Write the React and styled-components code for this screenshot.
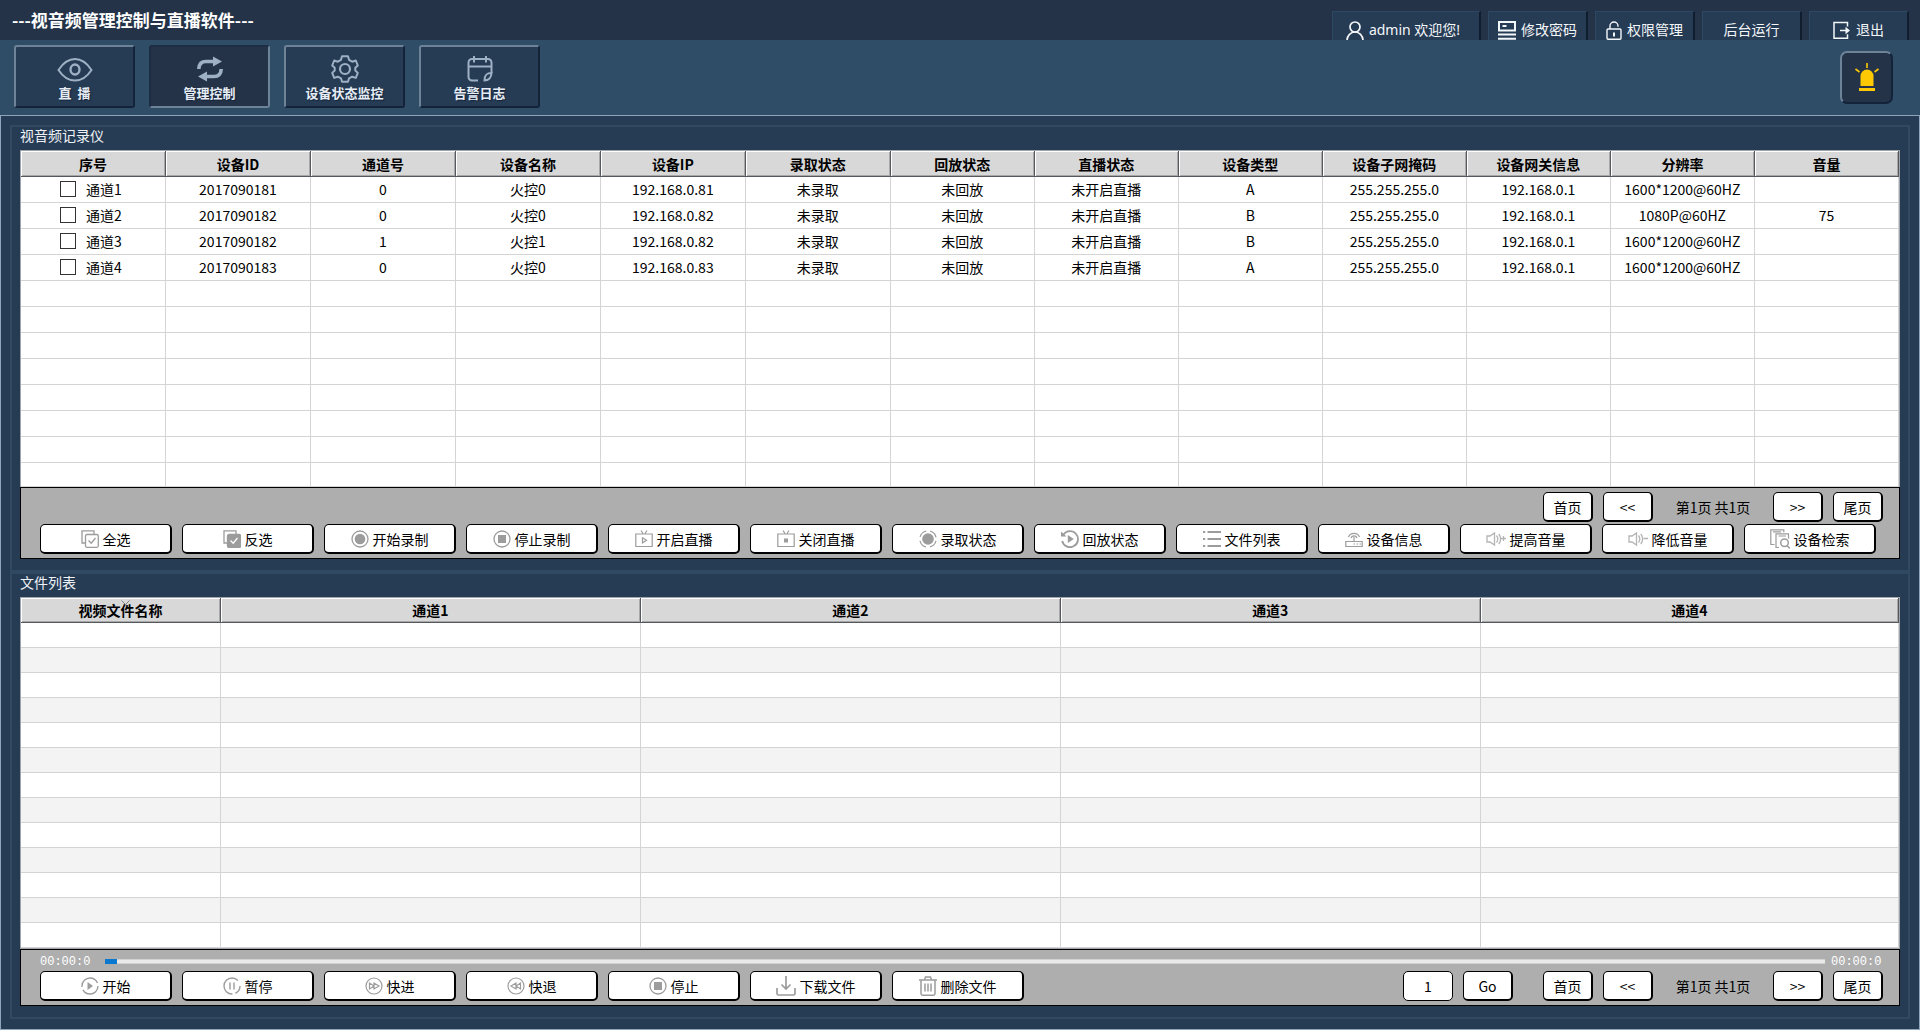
import React, { useState } from "react";
import styled, { createGlobalStyle, css } from "styled-components";

const GlobalStyle = createGlobalStyle`
  * { box-sizing: border-box; }
  body {
    margin: 0;
    background: #263b54;
    font-family: "Noto Sans CJK SC", "Noto Sans", sans-serif;
    font-size: 14px;
    color: #000;
  }
  button, input { font: inherit; color: inherit; margin: 0; }
`;

/* ---------- icons ---------- */

const Svg = styled.svg`
  flex: none;
  display: block;
  width: ${(p) => p.$w}px;
  height: ${(p) => p.$h}px;
  fill: none;
  stroke: currentColor;
  stroke-width: ${(p) => p.$stroke};
`;

function Icon({ w = 18, h = 18, box, stroke = 1.5, children }) {
  return (
    <Svg $w={w} $h={h} $stroke={stroke} viewBox={box || `0 0 ${w} ${h}`} aria-hidden="true">
      {children}
    </Svg>
  );
}

const icons = {
  eye: (
    <Icon w={36} h={28} stroke={2}>
      <path d="M1.5 15C6 8 11 4 18 4s12 4 16.5 11C30 22 25 25.5 18 25.5S6 22 1.5 15Z" />
      <ellipse cx="18" cy="14.5" rx="4.5" ry="5" strokeWidth="2.4" />
    </Icon>
  ),
  sync: (
    <Icon w={28} h={28} stroke={3.6}>
      <path d="M2.8 14C3 8.500 6 6.500 10 6.500h8" />
      <path d="M17 1.500 26 6.500l-9 5Z" fill="currentColor" stroke="none" />
      <path d="M25.200 14c-.2 5.500-3.200 7.500-7.200 7.500h-8" />
      <path d="M11 16.500 2 21.500l9 5Z" fill="currentColor" stroke="none" />
    </Icon>
  ),
  gear: (
    <Icon w={28} h={28} stroke={2}>
      <path d="M11 1.200h6l1 3.600 3.200 1.900 3.600-1.200 2 5-2.500 2.300v2.700l2.500 2.400-2 5-3.600-1.200L18 23.300l-1 3.500h-6l-1-3.500-3.200-1.600-3.600 1.200-2-5 2.500-2.400v-2.700L1.200 10.500l2-5 3.600 1.200L10 4.800Z" strokeLinejoin="round" />
      <circle cx="14" cy="14" r="5" strokeWidth="2.200" />
    </Icon>
  ),
  calendar: (
    <Icon w={28} h={28} stroke={2}>
      <path d="M12 25.500H6a3.500 3.500 0 0 1-3.500-3.500V7.500A3.500 3.500 0 0 1 6 4h16a3.500 3.500 0 0 1 3.500 3.500V18" />
      <path d="M2.500 11.500h23M8 1v6.500M20 1v6.500M8 4h12" />
      <path d="M25.500 18c-4 0-7 1-7 7.500 4 0 7-3 7-7.500Z" />
    </Icon>
  ),
  user: (
    <Icon w={18} h={19} stroke={1.700}>
      <circle cx="9" cy="6" r="5" />
      <path d="M1 19c.4-4.500 3.500-8 8-8s7.600 3.500 8 8" />
    </Icon>
  ),
  password: (
    <Icon w={18} h={19} stroke={2}>
      <path d="M1 1h16v8.500H1ZM4.500 5h4M0 13.500h18M0 17.800h18" />
    </Icon>
  ),
  lock: (
    <Icon w={16} h={19} stroke={1.400}>
      <rect x="1" y="8" width="14" height="10.300" rx="1" />
      <path d="M4 8V5a4 4 0 0 1 8 0v.8" />
      <path d="M8 11.500v4" strokeWidth="2" />
    </Icon>
  ),
  exit: (
    <Icon w={18} h={19} stroke={1.500}>
      <path d="M14.500 5.500V1.500H1v15.800h13.500v-4M7 9.500h8" />
      <path d="M12.500 5.800 17 9.500l-4.500 3.700Z" fill="currentColor" stroke="none" />
    </Icon>
  ),
  alarm: (
    <Icon w={26} h={30} stroke={2}>
      <path d="M6.500 23V13a6.500 6.500 0 0 1 13 0v10Z" fill="currentColor" stroke="none" />
      <path d="M5 26.500h16" strokeWidth="3" />
      <path d="M13 0v5M1.500 6l4 3M24.500 6l-4 3" strokeWidth="1.600" />
    </Icon>
  ),
  selectAll: (
    <Icon stroke={1.300}>
      <path d="M4.500 13H1V.8h12V4" />
      <rect x="4.500" y="4.500" width="12.800" height="12.800" rx="1.500" />
      <path d="m7.500 10.500 2.700 2.700L14.500 8" />
    </Icon>
  ),
  invert: (
    <Icon stroke={1.300}>
      <path d="M4.500 13H1V.8h12V4" />
      <rect x="4.500" y="4.500" width="13" height="13" rx="1.500" fill="currentColor" />
      <path d="m7.500 10.500 2.700 2.700L14.500 8" stroke="#fff" />
    </Icon>
  ),
  record: (
    <Icon stroke={1.300}>
      <circle cx="9" cy="9" r="8" />
      <circle cx="9" cy="9" r="5.300" fill="currentColor" stroke="none" />
    </Icon>
  ),
  stop: (
    <Icon stroke={1.300}>
      <circle cx="9" cy="9" r="8" />
      <rect x="5" y="5" width="8" height="8" fill="currentColor" stroke="none" />
    </Icon>
  ),
  liveOn: (
    <Icon stroke={1.200}>
      <path d="M.8 4h16.400v12.500H.8ZM6 .5l2 3M12 .5l-2 3" />
      <path d="M7.500 7.800v5l4-2.500Z" />
    </Icon>
  ),
  liveOff: (
    <Icon stroke={1.200}>
      <path d="M.8 4h16.400v12.500H.8ZM6 .5l2 3M12 .5l-2 3" />
      <rect x="7" y="8.500" width="4" height="4" fill="currentColor" stroke="none" />
    </Icon>
  ),
  recordState: (
    <Icon stroke={1.200}>
      <circle cx="9" cy="9" r="8.200" strokeDasharray="8.880 4" strokeDashoffset="-2" />
      <circle cx="9" cy="9" r="5.800" fill="currentColor" stroke="none" />
    </Icon>
  ),
  replayState: (
    <Icon stroke={1.800}>
      <path d="M2.500 4.500A8 8 0 1 1 1.200 11" />
      <path d="M0 1.500v5h5.500Z" fill="currentColor" stroke="none" />
      <path d="M6.800 5v8l6-4Z" fill="currentColor" stroke="none" />
    </Icon>
  ),
  list: (
    <Icon stroke={1.800}>
      <path d="M4.500 2H18M4.500 9H18M4.500 16H18M0 2h2.200M0 9h2.200M0 16h2.200" />
    </Icon>
  ),
  device: (
    <Icon stroke={1.200}>
      <path d="M.8 11.500h16.400v5H.8ZM9 7v4M3.500 7A6 6 0 0 1 14.500 7M6 8a3.200 3.200 0 0 1 6 0M8.500 14h1.500M11.500 14H13M14.500 14H16" />
    </Icon>
  ),
  volumeUp: (
    <Icon w={20} h={18} stroke={1.300}>
      <path d="M1 6v6h3l4.500 3V3L4 6ZM10.500 5.500c1.500 2 1.500 5 0 7M12.800 4c2.200 3 2.200 7 0 10M15 8.500h5M17.500 6v5" />
    </Icon>
  ),
  volumeDown: (
    <Icon w={20} h={18} stroke={1.300}>
      <path d="M1 6v6h3l4.500 3V3L4 6ZM10.500 5.500c1.500 2 1.500 5 0 7M12.800 4c2.200 3 2.200 7 0 10M15.500 8.500H20" />
    </Icon>
  ),
  search: (
    <Icon w={20} h={20} stroke={1.200}>
      <path d="M4.500 15.500H.8V.8h13v2.500M3 2.800h8M9 18.500H6V4.800h12.500v5M8.500 7h7.500" />
      <circle cx="14.500" cy="13.800" r="3.800" strokeWidth="1.500" />
      <path d="m17 16.500 2.800 3" strokeWidth="1.500" />
    </Icon>
  ),
  play: (
    <Icon stroke={1.400}>
      <circle cx="9" cy="9" r="8" strokeDasharray="21 3 23 3.260" />
      <path d="M6.500 5v8l5.500-4Z" fill="currentColor" stroke="none" />
    </Icon>
  ),
  pause: (
    <Icon stroke={1.400}>
      <circle cx="9" cy="9" r="8" strokeDasharray="9 3 32 6.260" />
      <path d="M7 5.500v7M11 5.500v7" />
    </Icon>
  ),
  forward: (
    <Icon stroke={1.200}>
      <circle cx="9" cy="9" r="8" />
      <path d="M4.500 6v6L9 9ZM9 6v6l5-3Z" />
    </Icon>
  ),
  rewind: (
    <Icon stroke={1.200}>
      <circle cx="9" cy="9" r="8" />
      <path d="M13.500 6v6L9 9ZM9 6v6L4 9Z" />
    </Icon>
  ),
  download: (
    <Icon w={20} h={20} stroke={1.700}>
      <path d="M10 0v13M5.500 8.500 10 13l4.500-4.500M1 12v5.500a1.500 1.500 0 0 0 1.500 1.500h15a1.500 1.500 0 0 0 1.500-1.500V12" />
    </Icon>
  ),
  trash: (
    <Icon w={18} h={20} stroke={1.500}>
      <path d="M0 4h18M5.500 4l1-3h5l1 3M2 4v13.500c0 1 .5 1.700 1.500 1.700h11c1 0 1.500-.7 1.500-1.700V4M6 7.500v8M9 7.500v8M12 7.500v8" />
    </Icon>
  ),
};

/* ---------- frame ---------- */

const Page = styled.div`
  min-height: 100vh;
  display: flex;
  flex-direction: column;
`;

const TitleBar = styled.header`
  height: 40px;
  display: flex;
  justify-content: space-between;
  padding: 0 11px 0 12px;
  overflow: hidden;
  background: #243348;
  color: #fff;
`;

const Title = styled.h1`
  margin: 0;
  font-size: 17px;
  line-height: 40px;
  font-weight: 700;
`;

const UserMenu = styled.nav`
  display: flex;
  gap: 7px;
  padding-top: 11px;
`;

const UserButton = styled.button`
  width: ${(p) => (p.$wide ? 149 : 100)}px;
  height: 40px;
  padding: 0 ${(p) => (p.$wide ? 6 : 0)}px 2px 0;
  display: flex;
  align-items: center;
  justify-content: center;
  gap: 5px;
  font-family: "Noto Sans", "Noto Sans CJK SC", sans-serif;
  line-height: 20px;
  white-space: nowrap;
  color: #f4f7fa;
  background: #263b54;
  border: 1px solid #2d4862;
  border-right: 2px solid #101d2e;
`;

const Toolbar = styled.div`
  height: 75px;
  display: flex;
  align-items: flex-start;
  gap: 14px;
  padding: 5px 27px 0 14px;
  background: #304d68;
`;

const raised = css`
  background: #263b54;
  border-style: solid;
  border-width: 2px;
  border-color: #6f8398 #13233a #13233a #6f8398;
`;

const sunken = css`
  background: #243348;
  border-style: solid;
  border-width: 2px;
  border-color: #1d2d42 #6f8398 #6f8398 #1d2d42;
`;

const Tab = styled.button`
  width: 121px;
  height: 63px;
  padding: 8px 0 0;
  display: flex;
  flex-direction: column;
  align-items: center;
  justify-content: flex-start;
  border-radius: 3px;
  color: #9db0c4;
  ${(p) => (p.$active ? sunken : raised)}
`;

const TabLabel = styled.span`
  font-size: 13px;
  line-height: 20px;
  font-weight: 700;
  white-space: pre;
  color: #e6edf5;
  text-shadow: 1px 1px 1px #13233a;
`;

const AlarmButton = styled.button`
  width: 53px;
  height: 53px;
  margin: 6px 0 0 auto;
  padding: 0;
  display: flex;
  align-items: center;
  justify-content: center;
  color: #fdc904;
  ${raised}
  background: #243348;
  border-radius: 7px;
`;

const Content = styled.main`
  flex: 1;
  padding: 9px;
  border: 1px solid #8fa5bb;
  background: #263b54;
`;

const Group = styled.section`
  padding: 0 8px 11px;
  border: 2px solid #324963;
`;

const GroupTitle = styled.h2`
  margin: 0 0 7px;
  font-size: 14px;
  line-height: 16px;
  font-weight: 400;
  color: #eef2f6;
`;

/* ---------- tables ---------- */

const TableFrame = styled.div`
  border: solid #a0a4a8;
  border-width: 1px 1px ${(p) => (p.$closed ? 1 : 0)}px;
  background: #fff;
`;

const Table = styled.table`
  width: 100%;
  table-layout: fixed;
  border-collapse: separate;
  border-spacing: 0;
  line-height: 20px;
  text-align: center;
`;

const HeadCell = styled.th`
  width: ${(p) => p.$width || "auto"};
  height: ${(p) => p.$height}px;
  padding: 0;
  font-weight: 700;
  white-space: nowrap;
  background: #d8d8d8;
  border-right: 1px solid #55585c;
  border-bottom: 1px solid #55585c;
  box-shadow: inset 1px 1px 0 #fff, inset -1px -1px 0 #a8a8a8;
`;

const SortHead = styled.span`
  position: relative;
  display: inline-block;
`;

const SortMark = styled.svg`
  position: absolute;
  top: 0;
  left: 50%;
  width: 9px;
  height: 5px;
  fill: none;
  stroke: #808080;
`;

const Row = styled.tr`
  background: ${(p) => (p.$shaded ? "#f3f3f3" : "#fff")};
`;

const Cell = styled.td`
  height: ${(p) => p.$height}px;
  padding: 0 0 2px;
  white-space: nowrap;
  border-right: 1px solid #d4d4d4;
  border-bottom: 1px solid #d4d4d4;
`;

const ChannelLabel = styled.label`
  display: flex;
  align-items: center;
  justify-content: center;
  gap: 10px;
  padding-right: 4px;
`;

const CheckBox = styled.input`
  appearance: none;
  width: 16px;
  height: 16px;
  border: 1px solid #333;
  background: #fff;
  &:checked { box-shadow: inset 0 0 0 3px #fff; background: #333; }
`;

/* ---------- control panels ---------- */

const Panel = styled.div`
  display: flex;
  flex-direction: column;
  gap: ${(p) => (p.$flush ? 0 : 2)}px;
  padding: ${(p) => (p.$flush ? "0 16px 4px 19px" : "4px 16px 4px 19px")};
  border: 1px solid #000;
  background: #aeaeae;
`;

const Actions = styled.div`
  flex: 1;
  display: flex;
  gap: 10px;
`;

const ControlRow = styled.div`
  display: flex;
  justify-content: flex-end;
`;

const buttonFace = css`
  height: 30px;
  padding: 0;
  border: solid #000;
  border-width: 1px 2px 2px 1px;
  border-radius: 5px;
  background: #fff;
  line-height: 20px;
  white-space: nowrap;
`;

const ActionButton = styled.button`
  ${buttonFace}
  flex: 0 1 132px;
  display: flex;
  align-items: center;
  justify-content: center;
  gap: 4px;
  & > svg { color: ${(p) => (p.$faint ? "#b4b4b4" : "#9c9c9c")}; }
`;

const PagerGroup = styled.div`
  display: flex;
  gap: 10px;
`;

const PagerButton = styled.button`
  ${buttonFace}
  width: 50px;
`;

const PageInfo = styled.span`
  width: 100px;
  line-height: 30px;
  text-align: center;
  white-space: nowrap;
`;

const JumpGroup = styled.div`
  display: flex;
  gap: 10px;
  margin-right: 30px;
`;

const PageInput = styled.input`
  width: 50px;
  height: 30px;
  padding: 0;
  text-align: center;
  border: 1px solid #000;
  border-radius: 5px;
  background: #fff;
`;

const Timeline = styled.div`
  height: 21px;
  display: flex;
  align-items: center;
  padding-top: 2px;
`;

const Time = styled.span`
  width: 52px;
  font-family: "Liberation Mono", monospace;
  font-size: 12px;
  line-height: 16px;
  color: #fff;
`;

const Seek = styled.input`
  appearance: none;
  flex: 1;
  min-width: 0;
  height: 5px;
  margin: 0 6px 0 13px;
  background: linear-gradient(#d2d2d2 1px, #e9e9e9 1px, #e9e9e9 4px, #d2d2d2 4px);
  &::-webkit-slider-thumb {
    appearance: none;
    width: 12px;
    height: 5px;
    background: #0b78d0;
  }
`;

/* ---------- data ---------- */

const tabs = [
  ["eye", "直  播"],
  ["sync", "管理控制"],
  ["gear", "设备状态监控"],
  ["calendar", "告警日志"],
];

const deviceColumns = [
  "序号", "设备ID", "通道号", "设备名称", "设备IP", "录取状态", "回放状态",
  "直播状态", "设备类型", "设备子网掩码", "设备网关信息", "分辨率", "音量",
];

const devices = [
  ["通道1", "2017090181", "0", "火控0", "192.168.0.81", "未录取", "未回放", "未开启直播", "A", "255.255.255.0", "192.168.0.1", "1600*1200@60HZ", ""],
  ["通道2", "2017090182", "0", "火控0", "192.168.0.82", "未录取", "未回放", "未开启直播", "B", "255.255.255.0", "192.168.0.1", "1080P@60HZ", "75"],
  ["通道3", "2017090182", "1", "火控1", "192.168.0.82", "未录取", "未回放", "未开启直播", "B", "255.255.255.0", "192.168.0.1", "1600*1200@60HZ", ""],
  ["通道4", "2017090183", "0", "火控0", "192.168.0.83", "未录取", "未回放", "未开启直播", "A", "255.255.255.0", "192.168.0.1", "1600*1200@60HZ", ""],
];

const deviceActions = [
  ["selectAll", "全选"], ["invert", "反选"], ["record", "开始录制"], ["stop", "停止录制"],
  ["liveOn", "开启直播"], ["liveOff", "关闭直播"], ["recordState", "录取状态"],
  ["replayState", "回放状态"], ["list", "文件列表"], ["device", "设备信息"],
  ["volumeUp", "提高音量", true], ["volumeDown", "降低音量", true], ["search", "设备检索"],
];

const fileColumns = ["视频文件名称", "通道1", "通道2", "通道3", "通道4"];
const fileWidths = ["200px", "22.36%", "22.36%", "22.36%", "auto"];

const playActions = [
  ["play", "开始"], ["pause", "暂停"], ["forward", "快进"], ["rewind", "快退"],
  ["stop", "停止"], ["download", "下载文件"], ["trash", "删除文件"],
];

const blankRows = (count) => Array.from({ length: count }, (_, i) => i);

/* ---------- views ---------- */

function ActionList({ items }) {
  return (
    <Actions>
      {items.map(([icon, text, faint]) => (
        <ActionButton key={text} type="button" $faint={faint}>
          {icons[icon]}
          <span>{text}</span>
        </ActionButton>
      ))}
    </Actions>
  );
}

function Pager() {
  return (
    <PagerGroup>
      <PagerButton type="button">首页</PagerButton>
      <PagerButton type="button">&lt;&lt;</PagerButton>
      <PageInfo>第1页 共1页</PageInfo>
      <PagerButton type="button">&gt;&gt;</PagerButton>
      <PagerButton type="button">尾页</PagerButton>
    </PagerGroup>
  );
}

function DeviceTable() {
  const [checked, setChecked] = useState({});
  return (
    <TableFrame>
      <Table>
        <thead>
          <tr>
            {deviceColumns.map((name, i) => (
              <HeadCell key={name} scope="col" $height={26} $width={i < 6 ? "7.72%" : undefined}>
                {name}
              </HeadCell>
            ))}
          </tr>
        </thead>
        <tbody>
          {devices.map((device) => (
            <Row key={device[0]}>
              <Cell $height={26}>
                <ChannelLabel>
                  <CheckBox
                    type="checkbox"
                    checked={!!checked[device[0]]}
                    onChange={(e) => setChecked({ ...checked, [device[0]]: e.target.checked })}
                  />
                  {device[0]}
                </ChannelLabel>
              </Cell>
              {device.slice(1).map((value, i) => (
                <Cell key={i} $height={26}>{value}</Cell>
              ))}
            </Row>
          ))}
          {blankRows(8).map((r) => (
            <Row key={r}>
              {deviceColumns.map((name) => (
                <Cell key={name} $height={r === 7 ? 24 : 26} />
              ))}
            </Row>
          ))}
        </tbody>
      </Table>
    </TableFrame>
  );
}

function FileTable() {
  return (
    <TableFrame $closed>
      <Table>
        <thead>
          <tr>
            {fileColumns.map((name, i) => (
              <HeadCell key={name} scope="col" $height={25} $width={fileWidths[i]}>
                {i === 0 ? (
                  <SortHead>
                    {name}
                    <SortMark viewBox="0 0 9 5" aria-hidden="true"><path d="M.5.5l4 4 4-4" /></SortMark>
                  </SortHead>
                ) : name}
              </HeadCell>
            ))}
          </tr>
        </thead>
        <tbody>
          {blankRows(13).map((r) => (
            <Row key={r} $shaded={r % 2 === 1}>
              {fileColumns.map((name) => <Cell key={name} $height={25} />)}
            </Row>
          ))}
        </tbody>
      </Table>
    </TableFrame>
  );
}

export default function App() {
  const [active, setActive] = useState("sync");
  const [page, setPage] = useState("1");
  const [position, setPosition] = useState(0);
  return (
    <Page>
      <GlobalStyle />
      <TitleBar>
        <Title>---视音频管理控制与直播软件---</Title>
        <UserMenu aria-label="用户">
          <UserButton type="button" $wide>{icons.user}admin 欢迎您!</UserButton>
          <UserButton type="button">{icons.password}修改密码</UserButton>
          <UserButton type="button">{icons.lock}权限管理</UserButton>
          <UserButton type="button">后台运行</UserButton>
          <UserButton type="button">{icons.exit}退出</UserButton>
        </UserMenu>
      </TitleBar>
      <Toolbar>
        {tabs.map(([icon, text]) => (
          <Tab key={icon} type="button" $active={active === icon} onClick={() => setActive(icon)}>
            {icons[icon]}
            <TabLabel>{text}</TabLabel>
          </Tab>
        ))}
        <AlarmButton type="button" aria-label="告警">{icons.alarm}</AlarmButton>
      </Toolbar>
      <Content>
        <Group>
          <GroupTitle>视音频记录仪</GroupTitle>
          <DeviceTable />
          <Panel>
            <ControlRow><Pager /></ControlRow>
            <ActionList items={deviceActions} />
          </Panel>
        </Group>
        <Group>
          <GroupTitle>文件列表</GroupTitle>
          <FileTable />
          <Panel $flush>
            <Timeline>
              <Time>00:00:0</Time>
              <Seek
                type="range"
                aria-label="播放进度"
                min="0"
                max="100"
                value={position}
                onChange={(e) => setPosition(Number(e.target.value))}
              />
              <Time>00:00:0</Time>
            </Timeline>
            <ControlRow>
              <ActionList items={playActions} />
              <JumpGroup>
                <PageInput aria-label="页码" value={page} onChange={(e) => setPage(e.target.value)} />
                <PagerButton type="button">Go</PagerButton>
              </JumpGroup>
              <Pager />
            </ControlRow>
          </Panel>
        </Group>
      </Content>
    </Page>
  );
}
